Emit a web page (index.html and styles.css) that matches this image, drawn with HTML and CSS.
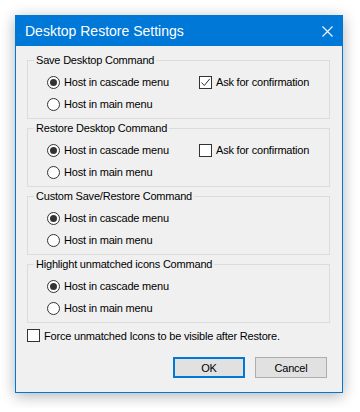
FILE: index.html
```html
<!DOCTYPE html>
<html lang="en">
<head>
    <meta charset="UTF-8">
    <meta name="viewport" content="width=device-width, initial-scale=1.0">
    <title>Desktop Restore Settings</title>
    <link rel="stylesheet" href="styles.css">
</head>
<body>
    <div class="dialog">
        <div class="titlebar">
            <div class="title">Desktop Restore Settings</div>
            <svg class="close" width="11" height="11" viewBox="0 0 11 11">
                <path d="M0.5 0.5 L10.5 10.5 M10.5 0.5 L0.5 10.5" stroke="#fff" stroke-width="1.1" fill="none"/>
            </svg>
        </div>

        <div class="content">
            <fieldset class="group">
                <legend>Save Desktop Command</legend>
                <div class="options">
                    <label class="opt"><span class="radio on"></span>Host in cascade menu</label>
                    <label class="opt"><span class="check">
                        <svg width="11" height="11" viewBox="0 0 11 11"><path d="M1.5 5.5 L4.3 8.5 L9.8 1.8" stroke="#333" stroke-width="1" fill="none"/></svg>
                    </span>Ask for confirmation</label>
                    <label class="opt"><span class="radio"></span>Host in main menu</label>
                </div>
            </fieldset>

            <fieldset class="group">
                <legend>Restore Desktop Command</legend>
                <div class="options">
                    <label class="opt"><span class="radio on"></span>Host in cascade menu</label>
                    <label class="opt"><span class="check"></span>Ask for confirmation</label>
                    <label class="opt"><span class="radio"></span>Host in main menu</label>
                </div>
            </fieldset>

            <fieldset class="group">
                <legend>Custom Save/Restore Command</legend>
                <div class="options">
                    <label class="opt"><span class="radio on"></span>Host in cascade menu</label>
                    <span></span>
                    <label class="opt"><span class="radio"></span>Host in main menu</label>
                </div>
            </fieldset>

            <fieldset class="group">
                <legend>Highlight unmatched icons Command</legend>
                <div class="options">
                    <label class="opt"><span class="radio on"></span>Host in cascade menu</label>
                    <span></span>
                    <label class="opt"><span class="radio"></span>Host in main menu</label>
                </div>
            </fieldset>

            <label class="force"><span class="check"></span>Force unmatched Icons to be visible after Restore.</label>

            <div class="buttons">
                <button class="btn default">OK</button>
                <button class="btn">Cancel</button>
            </div>
        </div>
    </div>
</body>
</html>
```

FILE: styles.css
```css
* {
    margin: 0;
    padding: 0;
    box-sizing: border-box;
}
body {
    font-family: 'Liberation Sans', Arial, sans-serif;
    background: #fff;
    padding: 15px;
    color: #000;
}
.dialog {
    width: 328px;
    height: 378px;
    border: 1px solid #0078d7;
    background: #f0f0f0;
    box-shadow: 0 3px 14px rgba(0,0,0,0.3);
}
.titlebar {
    height: 30px;
    background: #0078d7;
    color: white;
    display: flex;
    justify-content: space-between;
    align-items: center;
    padding: 0 9px;
}
.title {
    font-size: 14px;
}
.content {
    padding: 7px 12px 0 11px;
    font-size: 11px;
    letter-spacing: -0.2px;
}
.group {
    border: 1px solid #dcdcdc;
    padding: 4px 0 3px 6px;
    margin-bottom: 2px;
}
.group legend {
    padding: 0 2px;
    line-height: 14px;
}
.options {
    display: grid;
    grid-template-columns: 152px auto;
    grid-auto-rows: 22px;
    margin-left: 13px;
}
.opt {
    display: flex;
    align-items: center;
    gap: 4px;
}
.radio {
    width: 13px;
    height: 13px;
    border: 1px solid #333;
    border-radius: 50%;
    background: #fff;
    display: flex;
    align-items: center;
    justify-content: center;
}
.radio.on::after {
    content: "";
    width: 7px;
    height: 7px;
    border-radius: 50%;
    background: #333;
}
.check {
    width: 13px;
    height: 13px;
    border: 1px solid #333;
    background: #fff;
    display: flex;
    align-items: center;
    justify-content: center;
}
.force {
    display: flex;
    align-items: center;
    gap: 4px;
    height: 13px;
    margin-top: 6px;
}
.buttons {
    display: flex;
    justify-content: flex-end;
    gap: 10px;
    margin-top: 15px;
    padding-right: 3px;
}
.btn {
    width: 72px;
    height: 21px;
    background: #e1e1e1;
    border: 1px solid #adadad;
    font-family: inherit;
    font-size: 11px;
    letter-spacing: -0.2px;
    color: #000;
}
.btn.default {
    border: 2px solid #0078d7;
}
```
